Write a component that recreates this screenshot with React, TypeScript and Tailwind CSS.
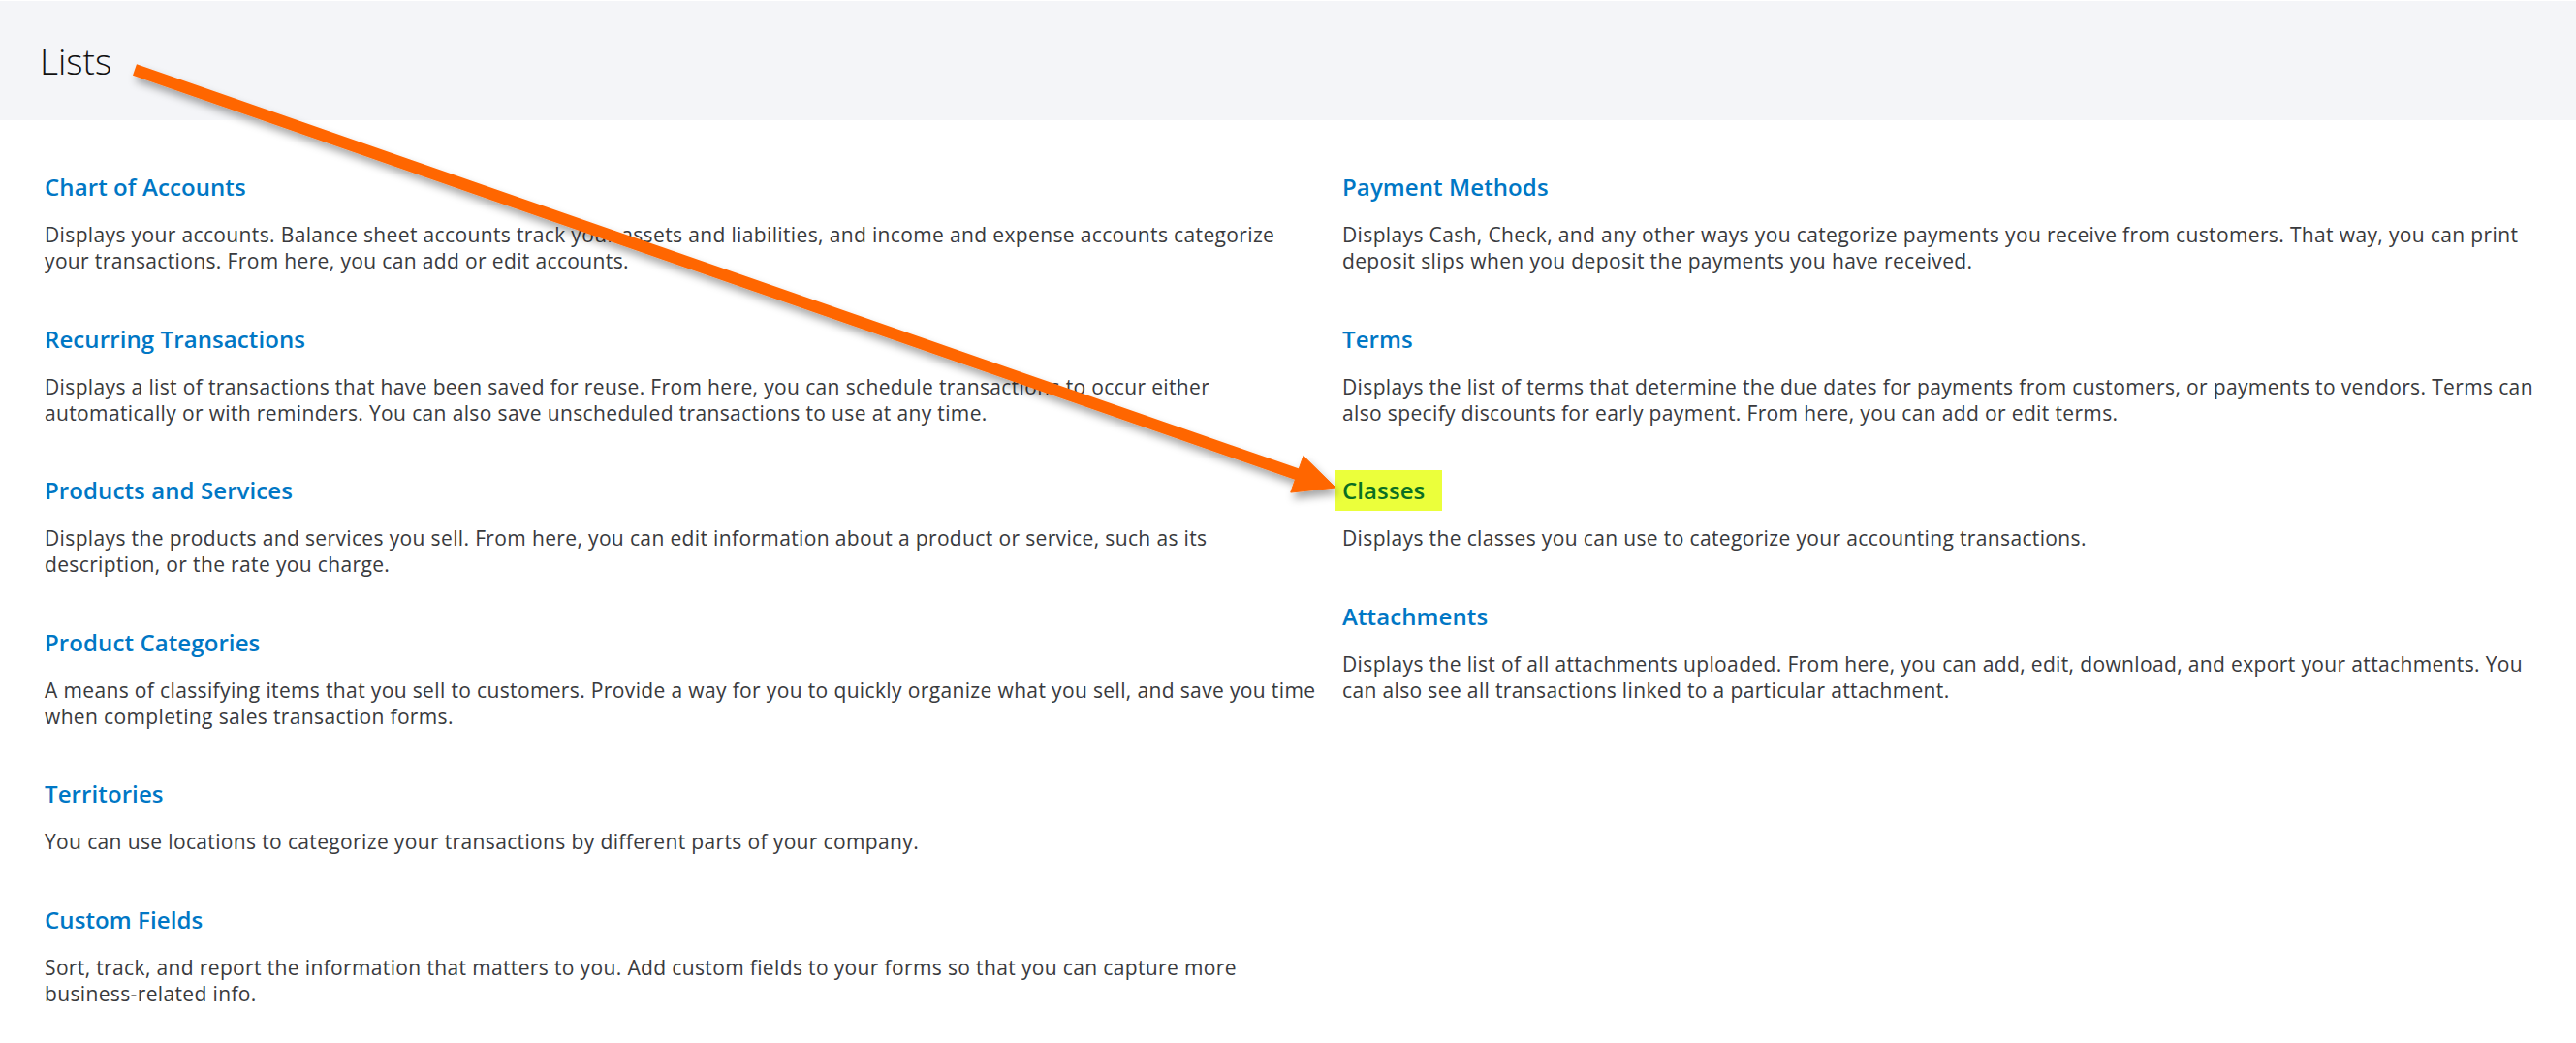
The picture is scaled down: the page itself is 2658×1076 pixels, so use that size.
import React from 'react';

type Entry = {
  title: string;
  lines: string[];
  highlight?: boolean;
};

const leftItems: Entry[] = [
  {
    title: 'Chart of Accounts',
    lines: [
      'Displays your accounts. Balance sheet accounts track your assets and liabilities, and income and expense accounts categorize',
      'your transactions. From here, you can add or edit accounts.',
    ],
  },
  {
    title: 'Recurring Transactions',
    lines: [
      'Displays a list of transactions that have been saved for reuse. From here, you can schedule transactions to occur either',
      'automatically or with reminders. You can also save unscheduled transactions to use at any time.',
    ],
  },
  {
    title: 'Products and Services',
    lines: [
      'Displays the products and services you sell. From here, you can edit information about a product or service, such as its',
      'description, or the rate you charge.',
    ],
  },
  {
    title: 'Product Categories',
    lines: [
      'A means of classifying items that you sell to customers. Provide a way for you to quickly organize what you sell, and save you time',
      'when completing sales transaction forms.',
    ],
  },
  {
    title: 'Territories',
    lines: ['You can use locations to categorize your transactions by different parts of your company.'],
  },
  {
    title: 'Custom Fields',
    lines: [
      'Sort, track, and report the information that matters to you. Add custom fields to your forms so that you can capture more',
      'business-related info.',
    ],
  },
];

const rightItems: Entry[] = [
  {
    title: 'Payment Methods',
    lines: [
      'Displays Cash, Check, and any other ways you categorize payments you receive from customers. That way, you can print',
      'deposit slips when you deposit the payments you have received.',
    ],
  },
  {
    title: 'Terms',
    lines: [
      'Displays the list of terms that determine the due dates for payments from customers, or payments to vendors. Terms can',
      'also specify discounts for early payment. From here, you can add or edit terms.',
    ],
  },
  {
    title: 'Classes',
    highlight: true,
    lines: ['Displays the classes you can use to categorize your accounting transactions.'],
  },
  {
    title: 'Attachments',
    lines: [
      'Displays the list of all attachments uploaded. From here, you can add, edit, download, and export your attachments. You',
      'can also see all transactions linked to a particular attachment.',
    ],
  },
];

const ListItem: React.FC<{ item: Entry }> = ({ item }) => (
  <div className="mb-[50.6px]">
    <div className="h-[32px] leading-[32px] text-[24px] font-semibold tracking-[0.1px]">
      {item.highlight ? (
        <span className="inline-block -ml-[8px] pl-[8px] pr-[18px] -my-[5px] py-[5px] bg-[#ebff3b] text-[#0a6f22]">
          {item.title}
        </span>
      ) : (
        <a href="#" className="text-[#0077c5]">
          {item.title}
        </a>
      )}
    </div>
    <div className="mt-[20px] text-[21px] leading-[27px] tracking-[0.36px] text-[#393a3d]">
      {item.lines.map((line) => (
        <div key={line} className="whitespace-nowrap">
          {line}
        </div>
      ))}
    </div>
  </div>
);

// orange call-out arrow drawn over the page
const Arrow: React.FC = () => {
  const sx = 139;
  const sy = 72;
  const tx = 1378;
  const ty = 503;
  const len = Math.hypot(tx - sx, ty - sy);
  const ux = (tx - sx) / len;
  const uy = (ty - sy) / len;
  const nx = -uy;
  const ny = ux;
  const head = 42;
  const half = 20;
  const bx = tx - ux * head;
  const by = ty - uy * head;
  const pts = `${tx},${ty} ${bx + nx * half},${by + ny * half} ${bx - nx * half},${by - ny * half}`;

  return (
    <svg className="absolute left-0 top-0 pointer-events-none" width="2658" height="1076">
      <defs>
        <filter id="arrowShadow" x="-10%" y="-10%" width="120%" height="130%">
          <feDropShadow dx="3" dy="6" stdDeviation="4" floodColor="#000" floodOpacity="0.35" />
        </filter>
      </defs>
      <g filter="url(#arrowShadow)" fill="#ff6600" stroke="#ff6600">
        <line x1={sx} y1={sy} x2={bx + ux * 4} y2={by + uy * 4} strokeWidth="12" />
        <polygon points={pts} strokeWidth="1" strokeLinejoin="miter" />
      </g>
    </svg>
  );
};

const App: React.FC = () => {
  return (
    <div className="relative min-h-screen bg-white font-['Open_Sans','Liberation_Sans',sans-serif] overflow-hidden">
      {/* Header */}
      <div className="h-[124px] border-t border-white bg-[#f4f5f8] flex items-center pl-[41px]">
        <h1 className="text-[37px] font-light text-[#111]">Lists</h1>
      </div>

      {/* Lists grid */}
      <div className="grid grid-cols-[1339px_1fr] pl-[46px] pt-[53px]">
        <div>
          {leftItems.map((it) => (
            <ListItem key={it.title} item={it} />
          ))}
        </div>
        <div>
          {rightItems.map((it) => (
            <ListItem key={it.title} item={it} />
          ))}
        </div>
      </div>

      <Arrow />
    </div>
  );
};

export default App;
